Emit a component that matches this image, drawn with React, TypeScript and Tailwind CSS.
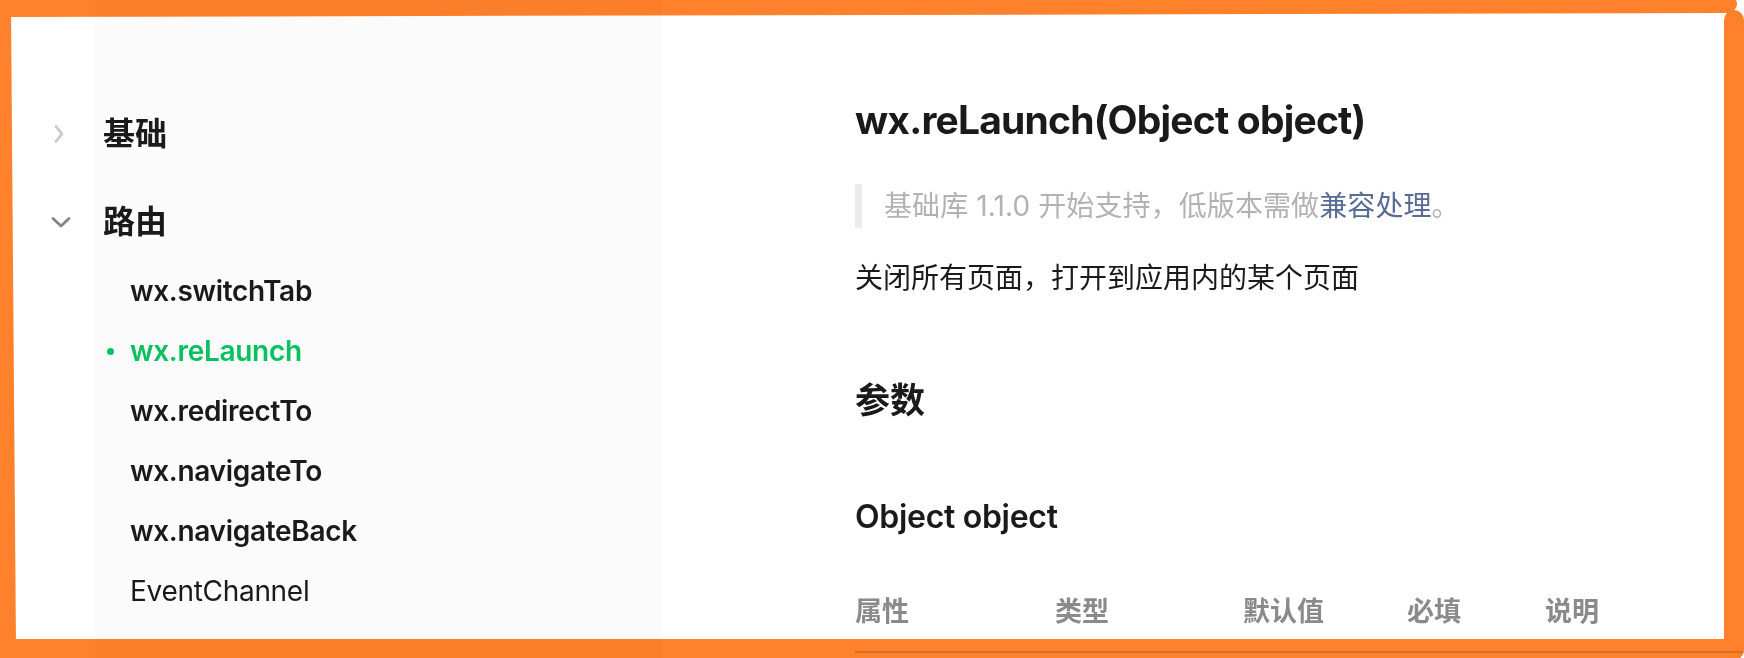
import React from "react";

const font = {
  fontFamily: '"Inter", "Noto Sans CJK SC", sans-serif',
};

function ChevronRight() {
  return (
    <svg width="24" height="20" viewBox="0 0 24 20" fill="none">
      <path d="M7 2.5 L13 10 L7 17.5" stroke="#c8c8c8" strokeWidth="2.6" strokeLinecap="round" strokeLinejoin="round" />
    </svg>
  );
}

function ChevronDown() {
  return (
    <svg width="24" height="20" viewBox="0 0 24 20" fill="none">
      <path d="M4 6.5 L12 14 L20 6.5" stroke="#858585" strokeWidth="2.8" strokeLinecap="round" strokeLinejoin="round" />
    </svg>
  );
}

const routes = [
  { name: "wx.switchTab", bold: true },
  { name: "wx.reLaunch", bold: true, active: true },
  { name: "wx.redirectTo", bold: true },
  { name: "wx.navigateTo", bold: true },
  { name: "wx.navigateBack", bold: true },
  { name: "EventChannel", bold: false },
];

function Sidebar() {
  return (
    <aside className="ml-[95px] w-[567px] shrink-0 bg-[#fbfbfb] pt-[106px]">
      <div className="-ml-[46px] flex h-[56px] items-center gap-[30px]">
        <ChevronRight />
        <span className="text-[32px] font-semibold text-[#1a1a1a]">基础</span>
      </div>
      <div className="-ml-[46px] mt-[32px] flex h-[56px] items-center gap-[30px]">
        <ChevronDown />
        <span className="text-[32px] font-semibold text-[#1a1a1a]">路由</span>
      </div>
      <ul className="mt-[11px]">
        {routes.map((r) =>
          r.active ? (
            <li key={r.name} className="flex h-[60px] items-center pl-[12px]">
              <span className="h-[7px] w-[7px] rounded-full bg-[#07c160]" />
              <span className="ml-[16px] text-[28px] font-semibold tracking-[-0.3px] text-[#07c160]">{r.name}</span>
            </li>
          ) : (
            <li
              key={r.name}
              className={
                r.bold
                  ? "flex h-[60px] items-center pl-[35px] text-[28px] font-semibold tracking-[-0.3px] text-[#1a1a1a]"
                  : "flex h-[60px] items-center pl-[35px] text-[28px] font-normal tracking-[-0.3px] text-[#1a1a1a]"
              }
            >
              {r.name}
            </li>
          )
        )}
      </ul>
    </aside>
  );
}

const columns = [
  { label: "属性", w: "w-[200px]" },
  { label: "类型", w: "w-[188px]" },
  { label: "默认值", w: "w-[164px]" },
  { label: "必填", w: "w-[138px]" },
  { label: "说明", w: "w-[200px]" },
];

function Content() {
  return (
    <main className="ml-[193px] flex-1 pt-[92px]">
      <h1 className="text-[39px] leading-[56px] font-bold tracking-[-0.8px] text-[#1a1a1a]">
        wx.reLaunch(Object object)
      </h1>
      <blockquote className="mt-[36px] flex h-[44px] items-center border-l-[7px] border-[#ececec] pl-[22px] text-[28px] tracking-[0.1px] text-[#b2b2b2]">
        <span>
          基础库 1.1.0 开始支持，低版本需做<span className="text-[#576b95]">兼容处理</span>。
        </span>
      </blockquote>
      <p className="mt-[28px] text-[28px] leading-[44px] text-[#1a1a1a]">关闭所有页面，打开到应用内的某个页面</p>
      <h2 className="mt-[72px] text-[35px] leading-[56px] font-semibold text-[#1a1a1a]">参数</h2>
      <h3 className="mt-[65px] text-[32px] leading-[48px] font-semibold tracking-[-0.3px] text-[#1a1a1a]">Object object</h3>
      <div className="mt-[51px] flex h-[61px] border-b-2 border-[#d9d9d9] pb-[19px]">
        {columns.map((c) => (
          <div key={c.label} className={`${c.w} shrink-0 text-[27px] leading-[40px] font-semibold text-[#8a8a8a]`}>
            {c.label}
          </div>
        ))}
      </div>
    </main>
  );
}

function Marker() {
  return (
    <svg
      className="pointer-events-none absolute inset-0 mix-blend-multiply"
      width="1744"
      height="658"
      viewBox="0 0 1744 658"
    >
      <g stroke="#ff812b" strokeLinecap="round" fill="none">
        <line x1="-10" y1="8" x2="1728" y2="4" strokeWidth="18" />
        <line x1="1" y1="6" x2="6" y2="648" strokeWidth="20" />
        <line x1="1734" y1="20" x2="1734" y2="650" strokeWidth="20" />
        <line x1="-10" y1="648.5" x2="1730" y2="648.5" strokeWidth="19" />
      </g>
    </svg>
  );
}

export default function App() {
  return (
    <div className="relative h-[658px] w-[1744px] overflow-hidden bg-white" style={font}>
      <div className="flex h-full">
        <Sidebar />
        <Content />
      </div>
      <Marker />
    </div>
  );
}
